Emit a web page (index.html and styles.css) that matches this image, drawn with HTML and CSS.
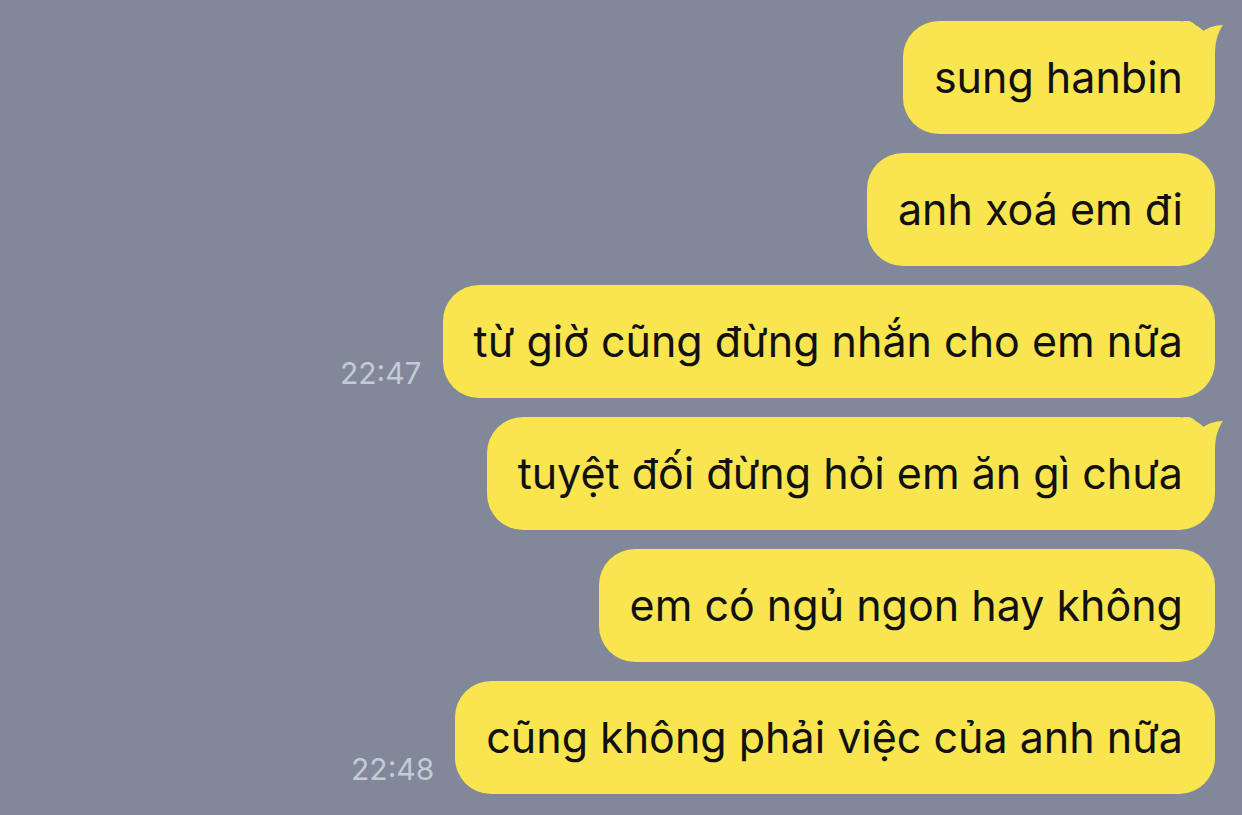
FILE: index.html
```html
<!DOCTYPE html>
<html lang="vi">
<head>
<meta charset="utf-8">
<link rel="stylesheet" href="styles.css">
</head>
<body>
<div class="chat">
  <div class="row">
    <div class="bubble tailed">sung hanbin
      <svg class="tail" viewBox="0 0 50 50" width="50" height="50"><path d="M8 0 L12 0 C20 0 23 8 27 11 C32 7 40 4 48 4 C44 10 40 18 40 34 L40 50 L8 50 Z"/></svg>
    </div>
  </div>
  <div class="row">
    <div class="bubble">anh xoá em đi</div>
  </div>
  <div class="row">
    <span class="time">22:47</span>
    <div class="bubble">từ giờ cũng đừng nhắn cho em nữa</div>
  </div>
  <div class="row">
    <div class="bubble tailed">tuyệt đối đừng hỏi em ăn gì chưa
      <svg class="tail" viewBox="0 0 50 50" width="50" height="50"><path d="M8 0 L12 0 C20 0 23 8 27 11 C32 7 40 4 48 4 C44 10 40 18 40 34 L40 50 L8 50 Z"/></svg>
    </div>
  </div>
  <div class="row">
    <div class="bubble">em có ngủ ngon hay không</div>
  </div>
  <div class="row">
    <span class="time">22:48</span>
    <div class="bubble">cũng không phải việc của anh nữa</div>
  </div>
</div>
</body>
</html>
```

FILE: styles.css
```css
html, body {
  margin: 0;
  padding: 0;
  background: #808899;
  height: 100%;
  overflow: hidden;
}

.chat {
  display: flex;
  flex-direction: column;
  gap: 19px;
  padding: 21px 27px 0 0;
  font-family: Inter, "Noto Sans", sans-serif;
}

.row {
  display: flex;
  justify-content: flex-end;
  align-items: flex-end;
  gap: 21px;
}

.bubble {
  position: relative;
  height: 113px;
  box-sizing: border-box;
  display: flex;
  align-items: center;
  padding: 0 32px 2px 31px;
  background: #f9e54f;
  color: #111;
  border-radius: 36px;
  font-size: 43px;
  white-space: nowrap;
}

.tail {
  position: absolute;
  top: 0;
  right: -10px;
  fill: #f9e54f;
}

.time {
  color: #c6cad4;
  font-size: 30px;
  line-height: 1;
  padding-bottom: 10px;
}
```
